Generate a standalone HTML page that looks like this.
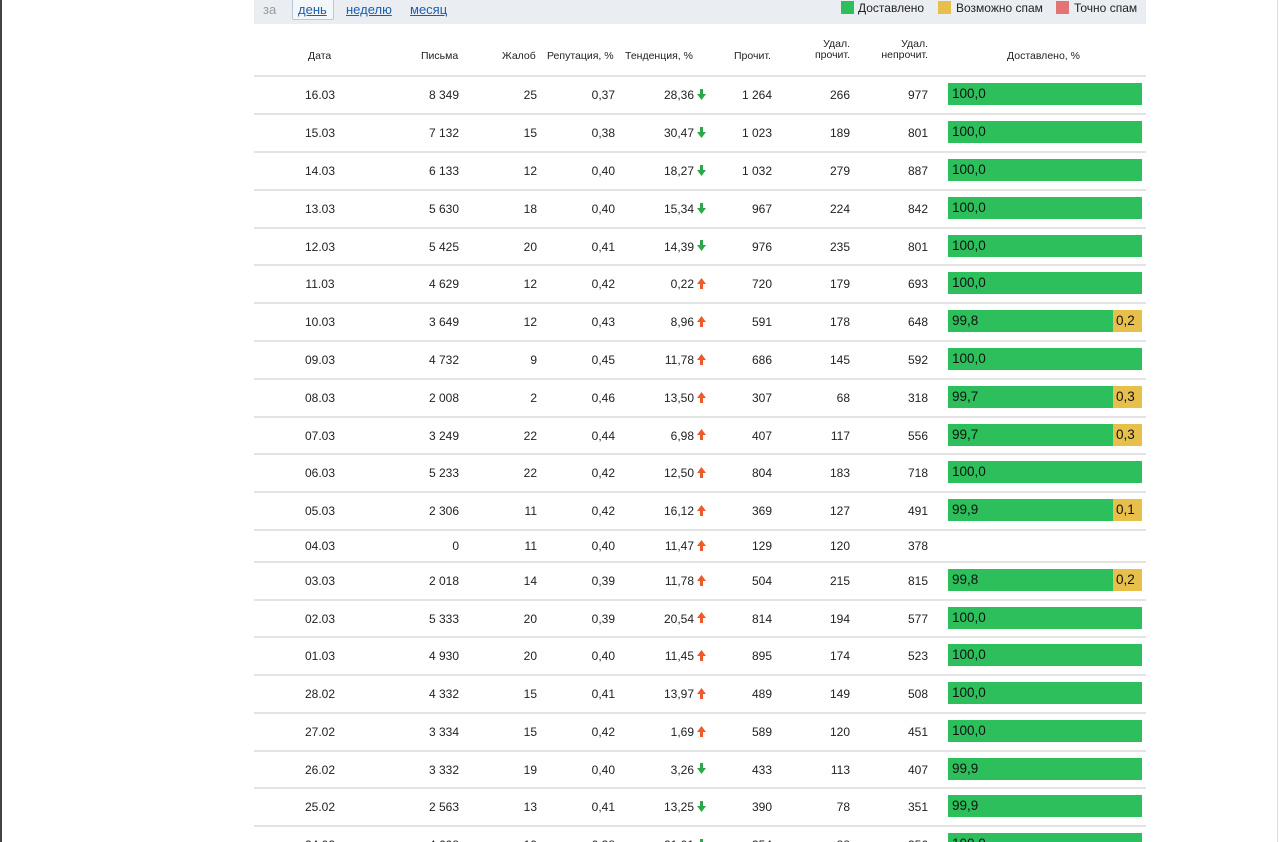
<!DOCTYPE html>
<html><head><meta charset="utf-8"><style>
*{margin:0;padding:0;box-sizing:border-box}
html{width:1280px;height:842px;overflow:hidden}
body{width:1280px;height:842px;overflow:hidden;background:#fff;font-family:"Liberation Sans",Arial,sans-serif;color:#222;position:relative}
.lb{position:absolute;left:0;top:0;width:2px;height:842px;background:#444}
.rb{position:absolute;left:1277px;top:0;width:1px;height:842px;background:#ddd}
.top{position:absolute;left:254px;top:0;width:892px;height:24px;background:#eaeef3}
.top .za{position:absolute;left:9px;top:2px;font-size:13px;color:#999}
.top .d{position:absolute;left:38px;top:-1px;width:42px;height:21px;border:1px solid #bcc8d6;border-radius:2px;background:#f4f7fa;font-size:13px;color:#1c5ea8;padding:2px 0 0 5px;text-decoration:underline}
.top a{position:absolute;top:2px;font-size:13px;color:#1c5ea8;text-decoration:underline}
.lg{position:absolute;top:1px;font-size:12px;color:#222}
.sq{position:absolute;top:1px;width:13px;height:13px}
.hd{position:absolute;top:24px;left:254px;width:892px;height:53px;border-bottom:2px solid #e4e4e4;font-size:10.5px}
.hd span{position:absolute;line-height:11px}
.r{position:absolute;left:254px;width:892px;border-bottom:2px solid #e4e4e4;font-size:12px}
.r span{position:absolute;top:0;bottom:0;display:flex;align-items:center}
.c1{left:0;width:132px;justify-content:center}
.c2{left:126px;width:79px;justify-content:flex-end}
.c3{left:226px;width:57px;justify-content:flex-end}
.c4{left:296px;width:65px;justify-content:flex-end}
.c5{left:366px;width:74px;justify-content:flex-end}
.c6{left:466px;width:52px;justify-content:flex-end}
.c7{left:536px;width:60px;justify-content:flex-end}
.c8{left:616px;width:58px;justify-content:flex-end}
.r .ar{left:443px;width:9px;top:-1px;bottom:1px}
.r .bar{left:694px;width:194px;height:22px;top:50%;margin-top:-12px;bottom:auto;display:flex;font-size:13.5px;color:#111}
.g{background:#2dbf5b;flex:1;padding-left:4px;line-height:22px;height:22px;font-style:normal}
.y{background:#e7c04c;width:29px;padding-left:3px;line-height:22px;height:22px;font-style:normal}
</style></head><body>
<div class="lb"></div><div class="rb"></div>
<div class="top">
<span class="za">за</span><span class="d">день</span>
<a style="left:92px">неделю</a><a style="left:156px">месяц</a>
<span class="sq" style="left:587px;background:#2dbf5b"></span><span class="lg" style="left:604px">Доставлено</span>
<span class="sq" style="left:684px;background:#e7c04c"></span><span class="lg" style="left:702px">Возможно спам</span>
<span class="sq" style="left:802px;background:#e57373"></span><span class="lg" style="left:820px">Точно спам</span>
</div>
<div class="hd">
<span style="left:54px;top:27px">Дата</span>
<span style="left:167px;top:27px">Письма</span>
<span style="left:248px;top:27px">Жалоб</span>
<span style="left:293px;top:27px">Репутация, %</span>
<span style="left:371px;top:27px">Тенденция, %</span>
<span style="left:480px;top:27px">Прочит.</span>
<span style="left:546px;top:15px;text-align:right;width:50px">Удал.<br>прочит.</span>
<span style="left:610px;top:15px;text-align:right;width:64px">Удал.<br>непрочит.</span>
<span style="left:753px;top:27px">Доставлено, %</span>
</div>

<svg width="0" height="0" style="position:absolute"><defs>
<symbol id="dn" viewBox="0 0 9 11"><rect x="3" y="0" width="3" height="6" fill="#2aa84a"/><polygon points="0,5 9,5 4.5,11" fill="#2aa84a"/></symbol>
<symbol id="up" viewBox="0 0 9 11"><rect x="3" y="5" width="3" height="6" fill="#ee5a2a"/><polygon points="0,6 9,6 4.5,0" fill="#ee5a2a"/></symbol>
</defs></svg>

<div class="r" style="top:77px;height:38px"><span class="c1">16.03</span><span class="c2">8 349</span><span class="c3">25</span><span class="c4">0,37</span><span class="c5">28,36</span><span class="ar"><svg width="9" height="11"><use href="#dn"/></svg></span><span class="c6">1 264</span><span class="c7">266</span><span class="c8">977</span><span class="bar"><i class="g">100,0</i></span></div>
<div class="r" style="top:115px;height:38px"><span class="c1">15.03</span><span class="c2">7 132</span><span class="c3">15</span><span class="c4">0,38</span><span class="c5">30,47</span><span class="ar"><svg width="9" height="11"><use href="#dn"/></svg></span><span class="c6">1 023</span><span class="c7">189</span><span class="c8">801</span><span class="bar"><i class="g">100,0</i></span></div>
<div class="r" style="top:153px;height:38px"><span class="c1">14.03</span><span class="c2">6 133</span><span class="c3">12</span><span class="c4">0,40</span><span class="c5">18,27</span><span class="ar"><svg width="9" height="11"><use href="#dn"/></svg></span><span class="c6">1 032</span><span class="c7">279</span><span class="c8">887</span><span class="bar"><i class="g">100,0</i></span></div>
<div class="r" style="top:191px;height:38px"><span class="c1">13.03</span><span class="c2">5 630</span><span class="c3">18</span><span class="c4">0,40</span><span class="c5">15,34</span><span class="ar"><svg width="9" height="11"><use href="#dn"/></svg></span><span class="c6">967</span><span class="c7">224</span><span class="c8">842</span><span class="bar"><i class="g">100,0</i></span></div>
<div class="r" style="top:229px;height:37px"><span class="c1">12.03</span><span class="c2">5 425</span><span class="c3">20</span><span class="c4">0,41</span><span class="c5">14,39</span><span class="ar"><svg width="9" height="11"><use href="#dn"/></svg></span><span class="c6">976</span><span class="c7">235</span><span class="c8">801</span><span class="bar"><i class="g">100,0</i></span></div>
<div class="r" style="top:266px;height:38px"><span class="c1">11.03</span><span class="c2">4 629</span><span class="c3">12</span><span class="c4">0,42</span><span class="c5">0,22</span><span class="ar"><svg width="9" height="11"><use href="#up"/></svg></span><span class="c6">720</span><span class="c7">179</span><span class="c8">693</span><span class="bar"><i class="g">100,0</i></span></div>
<div class="r" style="top:304px;height:38px"><span class="c1">10.03</span><span class="c2">3 649</span><span class="c3">12</span><span class="c4">0,43</span><span class="c5">8,96</span><span class="ar"><svg width="9" height="11"><use href="#up"/></svg></span><span class="c6">591</span><span class="c7">178</span><span class="c8">648</span><span class="bar"><i class="g">99,8</i><i class="y">0,2</i></span></div>
<div class="r" style="top:342px;height:38px"><span class="c1">09.03</span><span class="c2">4 732</span><span class="c3">9</span><span class="c4">0,45</span><span class="c5">11,78</span><span class="ar"><svg width="9" height="11"><use href="#up"/></svg></span><span class="c6">686</span><span class="c7">145</span><span class="c8">592</span><span class="bar"><i class="g">100,0</i></span></div>
<div class="r" style="top:380px;height:38px"><span class="c1">08.03</span><span class="c2">2 008</span><span class="c3">2</span><span class="c4">0,46</span><span class="c5">13,50</span><span class="ar"><svg width="9" height="11"><use href="#up"/></svg></span><span class="c6">307</span><span class="c7">68</span><span class="c8">318</span><span class="bar"><i class="g">99,7</i><i class="y">0,3</i></span></div>
<div class="r" style="top:418px;height:37px"><span class="c1">07.03</span><span class="c2">3 249</span><span class="c3">22</span><span class="c4">0,44</span><span class="c5">6,98</span><span class="ar"><svg width="9" height="11"><use href="#up"/></svg></span><span class="c6">407</span><span class="c7">117</span><span class="c8">556</span><span class="bar"><i class="g">99,7</i><i class="y">0,3</i></span></div>
<div class="r" style="top:455px;height:38px"><span class="c1">06.03</span><span class="c2">5 233</span><span class="c3">22</span><span class="c4">0,42</span><span class="c5">12,50</span><span class="ar"><svg width="9" height="11"><use href="#up"/></svg></span><span class="c6">804</span><span class="c7">183</span><span class="c8">718</span><span class="bar"><i class="g">100,0</i></span></div>
<div class="r" style="top:493px;height:38px"><span class="c1">05.03</span><span class="c2">2 306</span><span class="c3">11</span><span class="c4">0,42</span><span class="c5">16,12</span><span class="ar"><svg width="9" height="11"><use href="#up"/></svg></span><span class="c6">369</span><span class="c7">127</span><span class="c8">491</span><span class="bar"><i class="g">99,9</i><i class="y">0,1</i></span></div>
<div class="r" style="top:531px;height:32px"><span class="c1">04.03</span><span class="c2">0</span><span class="c3">11</span><span class="c4">0,40</span><span class="c5">11,47</span><span class="ar"><svg width="9" height="11"><use href="#up"/></svg></span><span class="c6">129</span><span class="c7">120</span><span class="c8">378</span></div>
<div class="r" style="top:563px;height:38px"><span class="c1">03.03</span><span class="c2">2 018</span><span class="c3">14</span><span class="c4">0,39</span><span class="c5">11,78</span><span class="ar"><svg width="9" height="11"><use href="#up"/></svg></span><span class="c6">504</span><span class="c7">215</span><span class="c8">815</span><span class="bar"><i class="g">99,8</i><i class="y">0,2</i></span></div>
<div class="r" style="top:601px;height:37px"><span class="c1">02.03</span><span class="c2">5 333</span><span class="c3">20</span><span class="c4">0,39</span><span class="c5">20,54</span><span class="ar"><svg width="9" height="11"><use href="#up"/></svg></span><span class="c6">814</span><span class="c7">194</span><span class="c8">577</span><span class="bar"><i class="g">100,0</i></span></div>
<div class="r" style="top:638px;height:38px"><span class="c1">01.03</span><span class="c2">4 930</span><span class="c3">20</span><span class="c4">0,40</span><span class="c5">11,45</span><span class="ar"><svg width="9" height="11"><use href="#up"/></svg></span><span class="c6">895</span><span class="c7">174</span><span class="c8">523</span><span class="bar"><i class="g">100,0</i></span></div>
<div class="r" style="top:676px;height:38px"><span class="c1">28.02</span><span class="c2">4 332</span><span class="c3">15</span><span class="c4">0,41</span><span class="c5">13,97</span><span class="ar"><svg width="9" height="11"><use href="#up"/></svg></span><span class="c6">489</span><span class="c7">149</span><span class="c8">508</span><span class="bar"><i class="g">100,0</i></span></div>
<div class="r" style="top:714px;height:38px"><span class="c1">27.02</span><span class="c2">3 334</span><span class="c3">15</span><span class="c4">0,42</span><span class="c5">1,69</span><span class="ar"><svg width="9" height="11"><use href="#up"/></svg></span><span class="c6">589</span><span class="c7">120</span><span class="c8">451</span><span class="bar"><i class="g">100,0</i></span></div>
<div class="r" style="top:752px;height:37px"><span class="c1">26.02</span><span class="c2">3 332</span><span class="c3">19</span><span class="c4">0,40</span><span class="c5">3,26</span><span class="ar"><svg width="9" height="11"><use href="#dn"/></svg></span><span class="c6">433</span><span class="c7">113</span><span class="c8">407</span><span class="bar"><i class="g">99,9</i></span></div>
<div class="r" style="top:789px;height:38px"><span class="c1">25.02</span><span class="c2">2 563</span><span class="c3">13</span><span class="c4">0,41</span><span class="c5">13,25</span><span class="ar"><svg width="9" height="11"><use href="#dn"/></svg></span><span class="c6">390</span><span class="c7">78</span><span class="c8">351</span><span class="bar"><i class="g">99,9</i></span></div>
<div class="r" style="top:827px;height:38px"><span class="c1">24.02</span><span class="c2">4 608</span><span class="c3">19</span><span class="c4">0,38</span><span class="c5">21,01</span><span class="ar"><svg width="9" height="11"><use href="#dn"/></svg></span><span class="c6">354</span><span class="c7">88</span><span class="c8">356</span><span class="bar"><i class="g">100,0</i></span></div>
</body></html>
